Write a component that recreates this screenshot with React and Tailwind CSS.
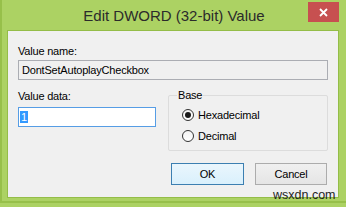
import React from "react";

function Radio({ checked, label }) {
  return (
    <div className="flex items-center h-[12px]">
      <div className="w-[12px] h-[12px] rounded-full border border-[#333] bg-gradient-to-b from-[#f4f4f4] to-[#ffffff] flex items-center justify-center">
        {checked && <div className="w-[6px] h-[6px] rounded-full bg-[#1a1a1a]" />}
      </div>
      <span className="ml-[4px] text-[11px] tracking-[-0.2px] leading-[14px] text-black">{label}</span>
    </div>
  );
}

export default function App() {
  return (
    <div className="w-[346px] h-[207px] bg-[#acd263] relative overflow-hidden font-['Liberation_Sans',Arial,sans-serif]">
      <div className="h-[203px] border-l-2 border-b-2 border-[#97c04a] flex flex-col">
        <div className="h-[30px] flex items-center justify-center pt-[1px]">
          <span className="text-[15px] text-[#2b2b2b] leading-none">Edit DWORD (32-bit) Value</span>
        </div>
        <div className="ml-[5px] w-[332px] h-[168px] border border-[#94bd48] bg-[#f0f0f0] px-[10px] pt-[12px] text-black tracking-[-0.2px]">
          <div className="text-[11px] leading-[16px]">Value name:</div>
          <div className="mt-[1px] h-[20px] w-[310px] border border-[#abadb3] bg-[#f0f0f0] pl-[3px] flex items-center text-[11px]">
            DontSetAutoplayCheckbox
          </div>
          <div className="mt-[8px] flex items-start">
            <div className="w-[138px] flex flex-col">
              <div className="text-[11px] leading-[16px]">Value data:</div>
              <div className="mt-[3px] h-[20px] w-[138px] border border-[#569de5] bg-white pl-[1px] flex items-center">
                <span className="bg-[#3399ff] text-white text-[11px] leading-[12px] px-[1px]">1</span>
              </div>
            </div>
            <div className="ml-[12px] mt-[7px] relative w-[160px] h-[56px] border border-[#dcdcdc] rounded-[2px] pl-[13px] pt-[13px] flex flex-col gap-[9px]">
              <span className="absolute -top-[8px] left-[8px] px-[1px] bg-[#f0f0f0] text-[11px] leading-[14px]">Base</span>
              <Radio checked label="Hexadecimal" />
              <Radio label="Decimal" />
            </div>
          </div>
          <div className="mt-[12px] flex justify-end gap-[11px] pr-[1px]">
            <button className="w-[73px] h-[22px] border border-[#3c7fb1] bg-gradient-to-b from-[#eaf6fd] to-[#d9f0fc] text-[11px] text-black flex items-center justify-center">
              OK
            </button>
            <button className="w-[72px] h-[22px] border border-[#acacac] bg-gradient-to-b from-[#f0f0f0] to-[#e5e5e5] text-[11px] text-black flex items-center justify-center">
              Cancel
            </button>
          </div>
        </div>
      </div>
      <div className="absolute left-[308px] top-[2px] w-[31px] h-[20px] bg-[#c75050] flex items-center justify-center">
        <svg width="9" height="9" viewBox="0 0 9 9">
          <path d="M1 1 L8 8 M8 1 L1 8" stroke="white" strokeWidth="1.8" />
        </svg>
      </div>
      <span className="absolute left-[273px] top-[187px] text-[12.5px] leading-[16px] text-[#1e1e1e]">wsxdn.com</span>
    </div>
  );
}
